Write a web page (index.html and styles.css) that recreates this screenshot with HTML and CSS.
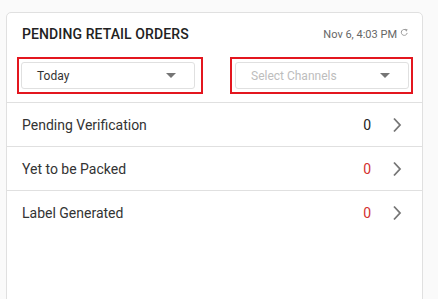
FILE: index.html
```html
<!DOCTYPE html>
<html>
<head>
    <meta charset="UTF-8">
    <title>Pending Retail Orders</title>
    <link rel="stylesheet" href="styles.css">
</head>
<body>
    <div class="card">
        <!-- title and last refresh time -->
        <div class="card-head">
            <h2 class="title">PENDING RETAIL ORDERS</h2>
            <div class="stamp">
                Nov 6, 4:03 PM
                <svg class="refresh" width="9" height="9" viewBox="0 0 10 10">
                    <path d="M8 5.5 A3.3 3.3 0 1 1 6.8 2.3" fill="none" stroke="#999" stroke-width="1.1"/>
                    <path d="M5.6 0.9 L8.6 1.8 L6.9 4.2 Z" fill="#999"/>
                </svg>
            </div>
        </div>
        <div class="filters">
            <div class="mark mark-one">
                <div class="select">
                    <span>Today</span>
                    <span class="caret"></span>
                </div>
            </div>
            <div class="mark mark-two">
                <div class="select">
                    <span class="placeholder">Select Channels</span>
                    <span class="caret"></span>
                </div>
            </div>
        </div>
        <div class="rows">
            <div class="row">
                <span class="label">Pending Verification</span>
                <span class="count">0</span>
                <svg class="chev" width="10" height="16" viewBox="0 0 10 16"><path d="M2 1.5 L8 8 L2 14.5" fill="none" stroke="#757575" stroke-width="1.8"/></svg>
            </div>
            <div class="row">
                <span class="label">Yet to be Packed</span>
                <span class="count count-red">0</span>
                <svg class="chev" width="10" height="16" viewBox="0 0 10 16"><path d="M2 1.5 L8 8 L2 14.5" fill="none" stroke="#757575" stroke-width="1.8"/></svg>
            </div>
            <div class="row">
                <span class="label">Label Generated</span>
                <span class="count count-red">0</span>
                <svg class="chev" width="10" height="16" viewBox="0 0 10 16"><path d="M2 1.5 L8 8 L2 14.5" fill="none" stroke="#757575" stroke-width="1.8"/></svg>
            </div>
        </div>
    </div>
</body>
</html>
```

FILE: styles.css
```css
body {
    margin: 0;
    background-color: #fafafa;
    font-family: Roboto, "Liberation Sans", sans-serif;
    overflow: hidden;
}
.card {
    margin: 12px 0 0 6px;
    width: 415px;
    min-height: 320px;
    background-color: #ffffff;
    border: 1px solid #e0e0e0;
    border-radius: 5px;
}
.card-head {
    display: flex;
    justify-content: space-between;
    align-items: center;
    height: 42px;
    padding: 0 13px 0 15px;
}
.title {
    margin: 0;
    font-size: 14px;
    font-weight: 500;
    color: #222222;
    letter-spacing: 0.1px;
}
.stamp {
    display: flex;
    align-items: center;
    gap: 3px;
    font-size: 11px;
    color: #666666;
}
.refresh {
    margin-top: -3px;
}
.filters {
    display: flex;
    gap: 27px;
    padding: 2px 0 8px 10px;
    border-bottom: 1px solid #e0e0e0;
}
.mark {
    border: 2px solid #e3161f;
    padding: 3px 0;
}
.mark-one {
    padding-left: 2px;
    padding-right: 6px;
}
.mark-two {
    padding-left: 3px;
    padding-right: 2px;
}
.select {
    box-sizing: border-box;
    display: flex;
    align-items: center;
    justify-content: space-between;
    width: 174px;
    height: 27px;
    padding: 0 18px 0 15px;
    border: 1px solid #e0e0e0;
    border-radius: 3px;
    font-size: 12px;
    color: #333333;
}
.placeholder {
    color: #bdbdbd;
}
.caret {
    width: 0;
    height: 0;
    border-left: 5px solid transparent;
    border-right: 5px solid transparent;
    border-top: 5px solid #757575;
}
.row {
    display: flex;
    align-items: center;
    height: 43px;
    padding: 0 20px 0 15px;
    border-bottom: 1px solid #e0e0e0;
    font-size: 14px;
    color: #333333;
}
.row:last-child {
    border-bottom: none;
}
.label {
    flex: 1;
}
.count {
    color: #222222;
    margin-right: 21px;
}
.count-red {
    color: #d32f2f;
}
```
